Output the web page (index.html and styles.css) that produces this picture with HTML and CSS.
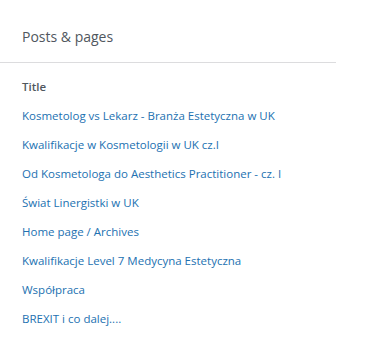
FILE: index.html
```
<!DOCTYPE html>
<html>
<head>
<meta charset="utf-8">
<link rel="stylesheet" href="styles.css">
</head>
<body>
<div class="card">
  <div class="card-header"><h2 class="card-title">Posts &amp; pages</h2></div>
  <div class="card-body">
    <div class="col-head">Title</div>
    <ul class="list">
      <li><a href="#">Kosmetolog vs Lekarz - Branża Estetyczna w UK</a></li>
      <li><a href="#">Kwalifikacje w Kosmetologii w UK cz.I</a></li>
      <li><a href="#">Od Kosmetologa do Aesthetics Practitioner - cz. I</a></li>
      <li><a href="#">Świat Linergistki w UK</a></li>
      <li><a href="#">Home page / Archives</a></li>
      <li><a href="#">Kwalifikacje Level 7 Medycyna Estetyczna</a></li>
      <li><a href="#">Współpraca</a></li>
      <li><a href="#">BREXIT i co dalej....</a></li>
    </ul>
  </div>
</div>
</body>
</html>
```
FILE: styles.css
```
html, body { margin: 0; padding: 0; background: #fff; }
body { font-family: "Open Sans", "Noto Sans", sans-serif; }
.card { width: 336px; }
.card-header { border-bottom: 1px solid #dcdcde; padding: 27px 22px 15px; }
.card-title { margin: 0; font-size: 14px; font-weight: 400; color: #50575e; line-height: 20px; }
.card-body { padding: 14px 22px 0; }
.col-head { font-size: 11.5px; font-weight: 600; color: #50575e; line-height: 20px; margin-bottom: 9px; }
.list { list-style: none; margin: 0; padding: 0; display: flex; flex-direction: column; gap: 9px; }
.list li { line-height: 20px; font-size: 11.5px; }
.list a { color: #2271b1; text-decoration: none; }
```
